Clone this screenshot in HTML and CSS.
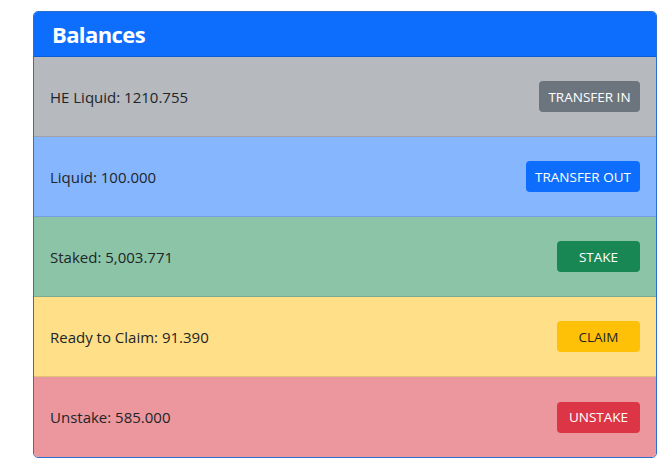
FILE: index.html
```html
<!DOCTYPE html>
<html lang="en">
<head>
  <meta charset="UTF-8">
  <title>Balances</title>
  <link rel="stylesheet" href="styles.css">
</head>
<body>

  <div class="card">
    <div class="card-header">
      <h3>Balances</h3>
    </div>
    <div class="row row-secondary">
      <span>HE Liquid: 1210.755</span>
      <button class="btn btn-secondary">TRANSFER IN</button>
    </div>
    <div class="row row-primary">
      <span>Liquid: 100.000</span>
      <button class="btn btn-primary">TRANSFER OUT</button>
    </div>
    <div class="row row-success">
      <span>Staked: 5,003.771</span>
      <button class="btn btn-success">STAKE</button>
    </div>
    <div class="row row-warning">
      <span>Ready to Claim: 91.390</span>
      <button class="btn btn-warning">CLAIM</button>
    </div>
    <div class="row row-danger">
      <span>Unstake: 585.000</span>
      <button class="btn btn-danger">UNSTAKE</button>
    </div>
  </div>

</body>
</html>
```

FILE: styles.css
```css
body {
  font-family: "Open Sans", "Noto Sans", sans-serif;
  margin: 0;
  padding: 11px 6px 0 33px;
  color: #212529;
  background-color: #fff;
}

.card {
  width: 622px;
  border: 1px solid #2a6fd0;
  border-radius: 5px;
  overflow: hidden;
}

.card-header {
  background-color: #0d6efd;
  color: #fff;
  height: 44px;
  padding: 0 17px 0 18px;
  display: flex;
  align-items: center;
  border-bottom: 1px solid rgba(0, 0, 0, 0.15);
}

.card-header h3 {
  margin: 0;
  font-size: 22px;
  font-weight: 700;
  letter-spacing: -0.6px;
}

.row {
  box-sizing: border-box;
  height: 80px;
  padding: 0 16px;
  display: flex;
  justify-content: space-between;
  align-items: center;
  font-size: 15px;
  border-bottom: 1px solid rgba(0, 0, 0, 0.12);
}

.row:last-child {
  border-bottom: none;
}

.row-secondary { background-color: #b6b9bd; }
.row-primary { background-color: #86b6fe; }
.row-success { background-color: #8cc4a8; }
.row-warning { background-color: #ffdf87; }
.row-danger { background-color: #ec979d; }

.btn {
  font-family: inherit;
  font-size: 13.5px;
  height: 31px;
  padding: 0 9px;
  border: none;
  border-radius: 4px;
  color: #fff;
  cursor: pointer;
}

.btn-secondary { background-color: #6c757d; min-width: 101px; }
.btn-primary { background-color: #0d6efd; min-width: 114px; }
.btn-success { background-color: #198754; min-width: 83px; }
.btn-warning { background-color: #ffc107; color: #212529; min-width: 83px; }
.btn-danger { background-color: #dc3545; min-width: 83px; }
```
